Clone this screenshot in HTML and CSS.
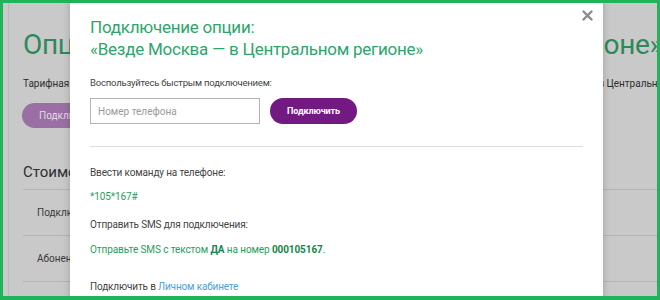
FILE: index.html
```html
<!DOCTYPE html>
<html lang="ru">
<head>
<meta charset="utf-8">
<title>Подключение опции</title>
<link rel="stylesheet" href="styles.css">
</head>
<body>
<div class="frame">
  <div class="page">
    <div class="side"></div>
    <div class="content">
      <h1 class="page-title">Опция «Везде Москва — в Центральном регионе»</h1>
      <p class="page-desc">Тарифная опция «Везде Москва — в Центральном регионе» позволяет звонить на номера Москвы и Московской области в Центральном регионе</p>
      <button class="page-btn">Подключить</button>
      <h2 class="page-sub">Стоимость</h2>
      <div class="row">Подключение</div>
      <div class="row">Абонентская плата</div>
      <div class="row"></div>
    </div>
  </div>
  <div class="modal">
    <button class="close" aria-label="Закрыть">
      <svg width="11" height="11" viewBox="0 0 11 11"><path d="M1.5 1.5 L9.5 9.5 M9.5 1.5 L1.5 9.5" stroke="#8a8a8a" stroke-width="2.4" stroke-linecap="round"/></svg>
    </button>
    <h3 class="m-title">Подключение опции:<br>«Везде Москва — в Центральном регионе»</h3>
    <p class="m-text m-quick">Воспользуйтесь быстрым подключением:</p>
    <div class="m-form">
      <input class="m-input" type="text" placeholder="Номер телефона">
      <button class="m-btn">Подключить</button>
    </div>
    <div class="m-divider"></div>
    <p class="m-text m-p1">Ввести команду на телефоне:</p>
    <p class="m-green m-code">*105*167#</p>
    <p class="m-text m-p2">Отправить SMS для подключения:</p>
    <p class="m-green m-sms">Отправьте SMS с текстом <b>ДА</b> на номер <b>000105167</b>.</p>
    <p class="m-text m-p3">Подключить в <a href="#" class="m-link">Личном кабинете</a></p>
  </div>
</div>
</body>
</html>
```
FILE: styles.css
```css
* { box-sizing: border-box; }
html, body { margin: 0; padding: 0; }
body { font-family: Roboto, "Liberation Sans", sans-serif; background: #c9c9c9; }

.frame {
  position: relative;
  width: 660px;
  height: 300px;
  overflow: hidden;
}
.frame::after {
  content: "";
  position: absolute;
  inset: 0;
  border-style: solid;
  border-color: #1fb45a;
  border-width: 3px 3px 4px 3px;
  z-index: 10;
  pointer-events: none;
}

.page {
  display: flex;
  height: 100%;
  background: #c9c9c9;
}
.side {
  width: 9px;
  flex: 0 0 9px;
  border-right: 1px solid #b9b9b9;
}
.content {
  flex: 1;
  padding-left: 14px;
  margin-right: -14px;
  min-width: 0;
  overflow: hidden;
}
.page-title {
  margin: 29px 0 0;
  font-size: 28px;
  line-height: 32px;
  font-weight: 400;
  letter-spacing: -0.35px;
  color: #2b8a5b;
  white-space: nowrap;
}
.page-desc {
  margin: 16px 0 0;
  font-size: 10px;
  line-height: 14px;
  word-spacing: -0.2px;
  color: #2e2e2e;
  white-space: nowrap;
}
.page-btn {
  display: block;
  margin: 12px 0 0 -1px;
  height: 25px;
  width: 90px;
  padding: 0 0 0 17px;
  text-align: left;
  border: none;
  border-radius: 13px;
  background: #9a6fa3;
  color: #e6dbe8;
  font-family: inherit;
  font-size: 10px;
}
.page-sub {
  margin: 34px 0 0;
  padding-bottom: 7px;
  font-size: 15px;
  line-height: 20px;
  font-weight: 400;
  color: #2e2e2e;
  border-bottom: 1px solid #b5b5b5;
}
.row {
  height: 46px;
  display: flex;
  align-items: center;
  padding-left: 14px;
  font-size: 10px;
  color: #3a3a3a;
  border-bottom: 1px solid #b5b5b5;
}

.modal {
  position: absolute;
  left: 70px;
  top: 0;
  width: 533px;
  height: 320px;
  background: #fff;
  box-shadow: 0 0 7px rgba(0, 0, 0, 0.22);
  padding: 16px 20px 0;
  z-index: 5;
}
.close {
  position: absolute;
  top: 9px;
  right: 10px;
  width: 12px;
  height: 12px;
  padding: 0;
  border: none;
  background: none;
  display: flex;
  align-items: center;
  justify-content: center;
}
.m-title {
  margin: 0;
  font-size: 17px;
  line-height: 22px;
  font-weight: 400;
  letter-spacing: -0.25px;
  color: #2ea56c;
}
.m-text {
  margin: 0;
  font-size: 10px;
  line-height: 14px;
  letter-spacing: -0.15px;
  color: #444;
}
.m-green {
  margin: 0;
  font-size: 10px;
  line-height: 14px;
  letter-spacing: -0.1px;
  color: #1f9f5c;
}
.m-green b { color: #17854c; font-weight: 700; }
.m-quick { margin-top: 16px; font-size: 9.5px; letter-spacing: -0.2px; }
.m-form {
  display: flex;
  gap: 10px;
  margin-top: 8px;
}
.m-input {
  width: 170px;
  height: 26px;
  border: 1px solid #b3b3b3;
  padding: 0 7px;
  font-family: inherit;
  font-size: 10px;
  color: #333;
  outline: none;
}
.m-input::placeholder { color: #9a9a9a; }
.m-btn {
  width: 87px;
  height: 26px;
  border: none;
  border-radius: 13px;
  background: #731982;
  color: #fff;
  font-family: inherit;
  font-size: 9px;
  font-weight: 700;
  letter-spacing: -0.1px;
}
.m-divider {
  margin-top: 22px;
  border-top: 1px solid #dedede;
}
.m-p1 { margin-top: 19px; }
.m-code { margin-top: 10px; }
.m-p2 { margin-top: 14px; }
.m-sms { margin-top: 11px; }
.m-p3 { margin-top: 23px; }
.m-link { color: #4ba0db; text-decoration: none; }
```
